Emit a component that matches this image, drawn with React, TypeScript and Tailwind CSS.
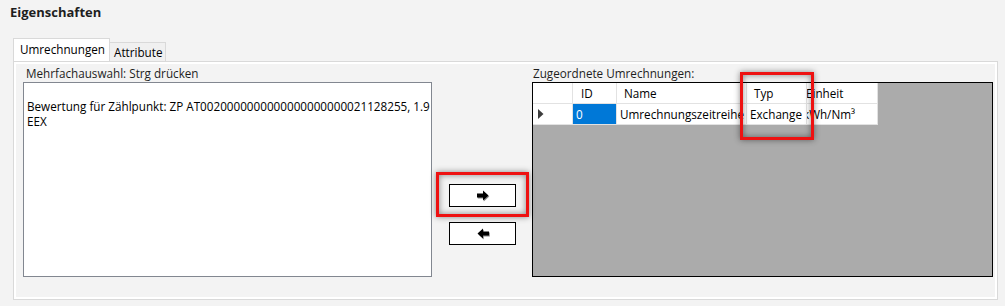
const ArrowRight = () => (
  <svg width="14" height="12" viewBox="0 0 14 12">
    <polygon points="1,3.5 7,3.5 7,0.5 12.5,5.5 7,10.5 7,7.5 1,7.5" fill="#8a8a8a" transform="translate(0.8,1)" />
    <polygon points="1,3.5 7,3.5 7,0.5 12.5,5.5 7,10.5 7,7.5 1,7.5" fill="#000" />
  </svg>
);

const ArrowLeft = () => (
  <svg width="14" height="12" viewBox="0 0 14 12">
    <polygon points="13,3.5 7,3.5 7,0.5 1.5,5.5 7,10.5 7,7.5 13,7.5" fill="#8a8a8a" transform="translate(0.8,1)" />
    <polygon points="13,3.5 7,3.5 7,0.5 1.5,5.5 7,10.5 7,7.5 13,7.5" fill="#000" />
  </svg>
);

const cols = [
  { key: "id", label: "ID", w: "w-[44px]", pl: "pl-[8px]" },
  { key: "name", label: "Name", w: "w-[130px]", pl: "pl-[7px]" },
  { key: "typ", label: "Typ", w: "w-[60px]", pl: "pl-[7px]" },
];

export default function App() {
  return (
    <div className="relative w-[1005px] h-[306px] bg-[#f3f3f3] text-[11.7px] text-black font-['Open_Sans',sans-serif] overflow-hidden">
      {/* Title */}
      <div className="pl-[10px] pt-[3px] h-[38px] text-[13px] font-bold text-[#1e1e1e]">Eigenschaften</div>

      {/* Tabs */}
      <div className="ml-[13px] flex items-end h-[23px]">
        <div className="w-[97px] h-[23px] bg-white border border-b-0 border-[#d9d9d9] pl-[6px] pt-[2px] leading-[16px]">
          Umrechnungen
        </div>
        <div className="w-[56px] h-[19px] bg-[#f0f0f0] border border-l-0 border-b-0 border-[#d9d9d9] pl-[4px] leading-[18px]">
          Attribute
        </div>
      </div>

      {/* Tab page */}
      <div className="ml-[13px] w-[985px] h-[239px] border border-[#d9d9d9]">
        <div className="h-full border-2 border-white flex pl-[7px]">
          {/* Source list */}
          <div className="w-[409px] flex flex-col">
            <div className="h-[18px] pl-[3px] leading-[18px] text-[#1e1e1e]">Mehrfachauswahl: Strg drücken</div>
            <div className="h-[195px] bg-white border border-[#828790] overflow-hidden pl-[3px] pt-[16px] leading-[15px] whitespace-nowrap">
              <div>Bewertung für Zählpunkt: ZP AT0020000000000000000000021128255, 1.9</div>
              <div>EEX</div>
            </div>
          </div>

          {/* Move buttons */}
          <div className="ml-[17px] w-[67px] flex flex-col pt-[120px] gap-[15px]">
            <button className="h-[23px] bg-white border border-black flex items-center justify-center">
              <ArrowRight />
            </button>
            <button className="h-[23px] bg-white border border-black flex items-center justify-center">
              <ArrowLeft />
            </button>
          </div>

          {/* Assigned grid */}
          <div className="ml-[16px] w-[461px] flex flex-col">
            <div className="h-[18px] pl-px leading-[18px] text-[#1e1e1e]">Zugeordnete Umrechnungen:</div>
            <div className="h-[195px] bg-[#ababab] border border-black">
              <div className="flex h-[21px] w-fit bg-white border-b border-[#e2e2e2]">
                <div className="w-[40px] border-r border-[#e2e2e2]" />
                {cols.map((c) => (
                  <div key={c.key} className={`${c.w} ${c.pl} border-r border-[#e2e2e2] leading-[20px]`}>
                    {c.label}
                  </div>
                ))}
                <div className="w-[71px] border-r border-[#e2e2e2] leading-[20px] overflow-hidden">
                  <span className="block -ml-[1px]">Einheit</span>
                </div>
              </div>
              <div className="flex h-[21px] w-fit bg-white border-b border-[#e2e2e2]">
                <div className="w-[40px] border-r border-[#e2e2e2] flex items-center pl-[5px]">
                  <svg width="6" height="10" viewBox="0 0 6 10">
                    <polygon points="0,0 5.5,5 0,10" fill="#3c3c3c" />
                  </svg>
                </div>
                <div className="w-[44px] bg-[#0078d7] text-white pl-[3px] border-r border-[#e2e2e2] leading-[20px]">0</div>
                <div className="w-[130px] pl-[3px] border-r border-[#e2e2e2] leading-[20px] overflow-hidden whitespace-nowrap">
                  Umrechnungszeitreihe
                </div>
                <div className="w-[60px] pl-[3px] border-r border-[#e2e2e2] leading-[20px] overflow-hidden whitespace-nowrap">
                  Exchange
                </div>
                <div className="w-[71px] border-r border-[#e2e2e2] leading-[20px] overflow-hidden whitespace-nowrap">
                  <span className="block -ml-[4px]">kWh/Nm³</span>
                </div>
              </div>
            </div>
          </div>
        </div>
      </div>

      {/* Red highlight annotations */}
      <div className="absolute left-[436px] top-[172px] w-[93px] h-[45px] border-[3px] border-[#ee1111] shadow-[0_0_6px_rgba(0,0,0,0.45),inset_0_0_6px_rgba(0,0,0,0.45)]" />
      <div className="absolute left-[740px] top-[72px] w-[74px] h-[68px] border-[3px] border-[#ee1111] shadow-[0_0_6px_rgba(0,0,0,0.45),inset_0_0_6px_rgba(0,0,0,0.45)]" />
    </div>
  );
}
